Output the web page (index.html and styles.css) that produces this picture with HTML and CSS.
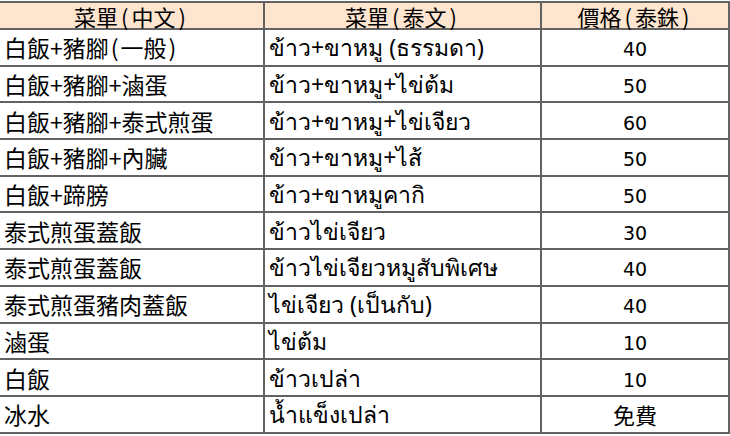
FILE: index.html
```html
<!DOCTYPE html>
<html lang="zh-Hant">
<head>
<meta charset="utf-8">
<link rel="stylesheet" href="styles.css">
</head>
<body>
<table class="menu">
  <colgroup>
    <col class="c-zh">
    <col class="c-th">
    <col class="c-price">
  </colgroup>
  <thead>
    <tr class="head">
      <th>菜單<span class="p">(</span>中文<span class="p">)</span></th>
      <th>菜單<span class="p">(</span>泰文<span class="p">)</span></th>
      <th>價格<span class="p">(</span>泰銖<span class="p">)</span></th>
    </tr>
  </thead>
  <tbody>
    <tr><td class="zh">白飯+豬腳<span class="p">(</span>一般<span class="p">)</span></td><td class="th">ข้าว+ขาหมู (ธรรมดา)</td><td class="price">40</td></tr>
    <tr><td class="zh">白飯+豬腳+滷蛋</td><td class="th">ข้าว+ขาหมู+ไข่ต้ม</td><td class="price">50</td></tr>
    <tr><td class="zh">白飯+豬腳+泰式煎蛋</td><td class="th">ข้าว+ขาหมู+ไข่เจียว</td><td class="price">60</td></tr>
    <tr><td class="zh">白飯+豬腳+內臟</td><td class="th">ข้าว+ขาหมู+ไส้</td><td class="price">50</td></tr>
    <tr><td class="zh">白飯+蹄膀</td><td class="th">ข้าว+ขาหมูคากิ</td><td class="price">50</td></tr>
    <tr><td class="zh">泰式煎蛋蓋飯</td><td class="th">ข้าวไข่เจียว</td><td class="price">30</td></tr>
    <tr><td class="zh">泰式煎蛋蓋飯</td><td class="th">ข้าวไข่เจียวหมูสับพิเศษ</td><td class="price">40</td></tr>
    <tr><td class="zh">泰式煎蛋豬肉蓋飯</td><td class="th">ไข่เจียว (เป็นกับ)</td><td class="price">40</td></tr>
    <tr><td class="zh">滷蛋</td><td class="th">ไข่ต้ม</td><td class="price">10</td></tr>
    <tr><td class="zh">白飯</td><td class="th">ข้าวเปล่า</td><td class="price">10</td></tr>
    <tr><td class="zh">冰水</td><td class="th">น้ำแข็งเปล่า</td><td class="price free">免費</td></tr>
  </tbody>
</table>
</body>
</html>
```

FILE: styles.css
```css
html, body {
  margin: 0;
  padding: 0;
  background: #ffffff;
}

body {
  padding-top: 1px;
}

.menu {
  border-collapse: collapse;
  table-layout: fixed;
  width: 729px;
  font-family: "Noto Sans CJK TC", "Noto Sans", "DejaVu Sans", sans-serif;
  color: #000;
}

.c-zh { width: 264px; }
.c-th { width: 277px; }
.c-price { width: 188px; }

.menu th,
.menu td {
  border: 2px solid #626262;
  padding: 0 0 0 4px;
  white-space: nowrap;
}

.menu tr > :first-child {
  border-left: none;
}

.p {
  padding: 0 2px;
}

.head .p {
  padding: 0 3px;
}

.head th {
  background: #fde5cf;
  height: 23px;
  font-size: 22px;
  font-weight: normal;
  text-align: center;
  line-height: 23px;
  padding: 2px 0 0 0;
  vertical-align: middle;
}

.menu tbody tr {
  height: 36.7px;
}

.menu td {
  font-size: 23px;
  line-height: 28px;
  vertical-align: middle;
  overflow: hidden;
}

.menu td.th {
  font-family: "Noto Sans", "DejaVu Sans", sans-serif;
}

.menu td.price {
  text-align: center;
  padding: 4px 0 0 0;
  font-family: "DejaVu Sans", "Noto Sans CJK TC", sans-serif;
  font-size: 19px;
}

.menu td.free {
  font-family: "Noto Sans CJK TC", sans-serif;
  font-size: 22px;
  padding-top: 0;
}
```
